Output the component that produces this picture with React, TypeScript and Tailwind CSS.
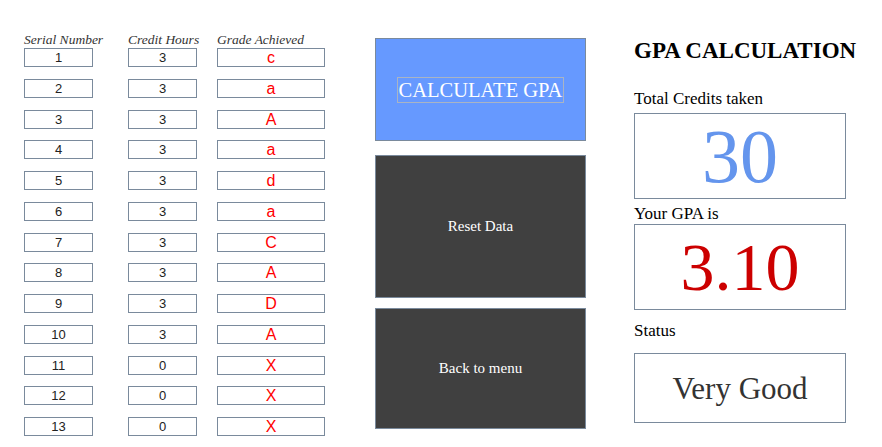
const rows: { n: number; credit: number; grade: string }[] = [
  { n: 1, credit: 3, grade: "c" },
  { n: 2, credit: 3, grade: "a" },
  { n: 3, credit: 3, grade: "A" },
  { n: 4, credit: 3, grade: "a" },
  { n: 5, credit: 3, grade: "d" },
  { n: 6, credit: 3, grade: "a" },
  { n: 7, credit: 3, grade: "C" },
  { n: 8, credit: 3, grade: "A" },
  { n: 9, credit: 3, grade: "D" },
  { n: 10, credit: 3, grade: "A" },
  { n: 11, credit: 0, grade: "X" },
  { n: 12, credit: 0, grade: "X" },
  { n: 13, credit: 0, grade: "X" },
];

// A bordered text box, like the old WinForms text boxes.
function Cell({ children, className }: { children: React.ReactNode; className: string }) {
  return (
    <div
      className={`flex h-[19px] items-center justify-center border border-[#7a8a9c] bg-white font-['Liberation_Sans',sans-serif] leading-none ${className}`}
    >
      {children}
    </div>
  );
}

export default function App() {
  return (
    <main className="flex h-[447px] w-[882px] items-start overflow-hidden bg-white font-['Liberation_Serif',serif] text-black">
      {/* Course table */}
      <section className="ml-[24px] mt-[32px] flex w-[301px] flex-col">
        <div className="flex h-[16px] items-center whitespace-nowrap text-[13.5px] italic text-[#333]">
          <span className="w-[104px]">Serial Number</span>
          <span className="w-[89px]">Credit Hours</span>
          <span>Grade Achieved</span>
        </div>
        <div className="flex flex-col gap-[11.75px]">
          {rows.map((r) => (
            <div key={r.n} className="flex">
              <Cell className="w-[69px] text-[13px] text-[#222]">{r.n}</Cell>
              <Cell className="ml-[35px] w-[69px] text-[13px] text-[#222]">{r.credit}</Cell>
              <Cell className="ml-[20px] w-[108px] pt-[1px] text-[16px] text-[#ff0000]">{r.grade}</Cell>
            </div>
          ))}
        </div>
      </section>

      {/* Buttons */}
      <section className="ml-[50px] mt-[38px] flex w-[211px] flex-col">
        <button className="flex h-[103px] items-center justify-center border border-[#7a8a9c] bg-[#6699ff]">
          <span className="border border-[#a9b4c4] px-[1px] text-[20.5px] leading-[24px] text-white">
            CALCULATE GPA
          </span>
        </button>
        <button className="mt-[14px] flex h-[143px] items-center justify-center border border-[#7a8a9c] bg-[#404040] text-[15px] text-white">
          Reset Data
        </button>
        <button className="mt-[10px] flex h-[121px] items-center justify-center border border-[#7a8a9c] bg-[#404040] text-[15px] text-white">
          Back to menu
        </button>
      </section>

      {/* Results */}
      <section className="ml-[48px] mt-[36px] flex w-[212px] flex-col">
        <h1 className="whitespace-nowrap text-[23px] font-bold leading-[30px]">GPA CALCULATION</h1>
        <p className="mt-[23px] text-[17px] leading-[20px]">Total Credits taken</p>
        <div className="mt-[4px] flex h-[86px] items-center justify-center border border-[#7a8a9c] text-[76px] leading-none text-[#6495ed]">
          30
        </div>
        <p className="mt-[5px] text-[17px] leading-[20px]">Your GPA is</p>
        <div className="flex h-[86px] items-center justify-center border border-[#7a8a9c] text-[68px] leading-none text-[#cc0000]">
          3.10
        </div>
        <p className="mt-[11px] text-[17px] leading-[20px]">Status</p>
        <div className="mt-[12px] flex h-[70px] items-center justify-center border border-[#7a8a9c] text-[31px] leading-none text-[#333]">
          Very Good
        </div>
      </section>
    </main>
  );
}
